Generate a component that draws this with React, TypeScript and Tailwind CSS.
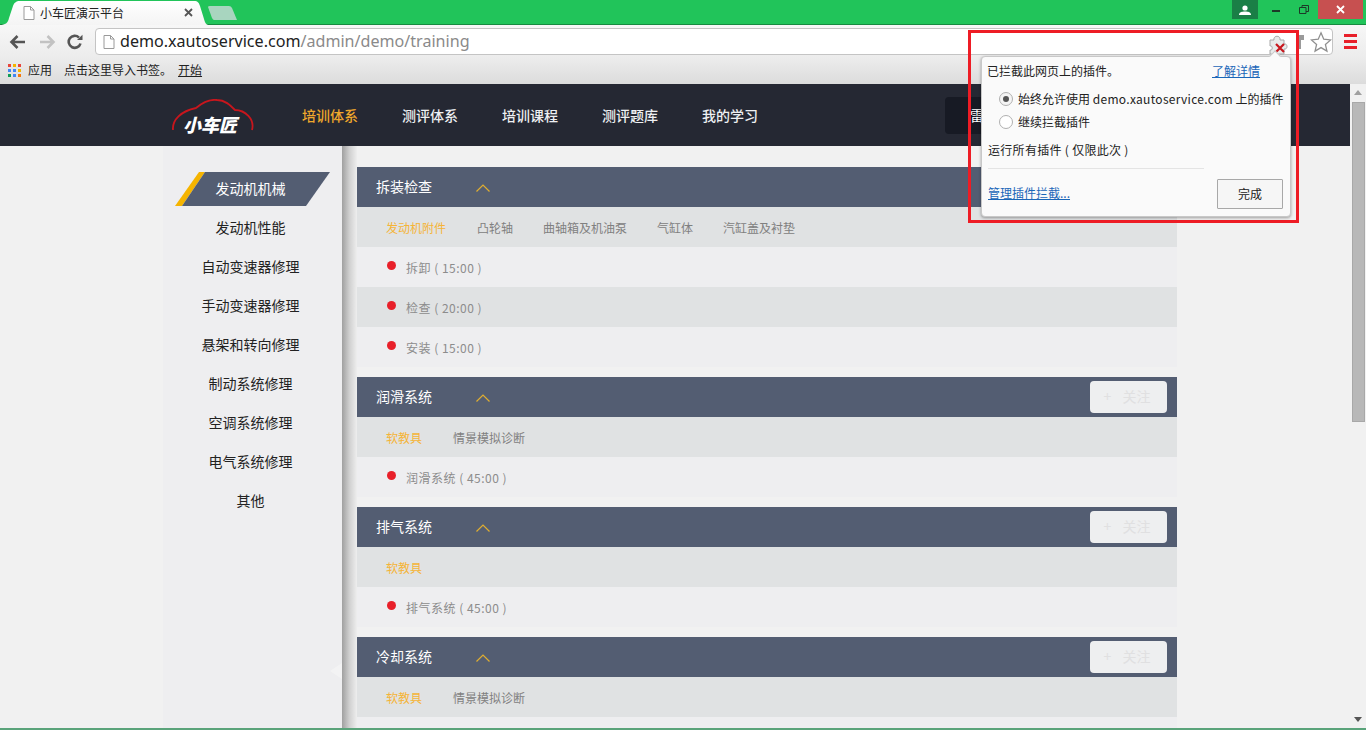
const font = "font-['Noto_Sans_CJK_SC','Noto_Sans',sans-serif]";

const navItems = ['培训体系', '测评体系', '培训课程', '测评题库', '我的学习'];
const sideItems = ['发动机性能', '自动变速器修理', '手动变速器修理', '悬架和转向修理', '制动系统修理', '空调系统修理', '电气系统修理', '其他'];

const sections = [
  {
    title: '拆装检查',
    tabs: ['发动机附件', '凸轮轴', '曲轴箱及机油泵', '气缸体', '汽缸盖及衬垫'],
    rows: ['拆卸 ( 15:00 )', '检查 ( 20:00 )', '安装 ( 15:00 )'],
  },
  { title: '润滑系统', tabs: ['软教具', '情景模拟诊断'], rows: ['润滑系统 ( 45:00 )'] },
  { title: '排气系统', tabs: ['软教具'], rows: ['排气系统 ( 45:00 )'] },
  { title: '冷却系统', tabs: ['软教具', '情景模拟诊断'], rows: [''] },
];

function Section({ title, tabs, rows }: { title: string; tabs: string[]; rows: string[] }) {
  return (
    <div className="mb-[10px]">
      <div className="flex items-center h-10 bg-[#535d72] pl-[19px] pr-[10px]">
        <span className="text-sm text-white w-[100px] pb-[2px]">{title}</span>
        <svg className="mt-[2px]" width="14" height="8" viewBox="0 0 14 8" fill="none" stroke="#e0ae30" strokeWidth="1.200">
          <path d="M.5 7.500L7 1l6.500 6.500" />
        </svg>
        <button className="ml-auto w-[77px] h-8 bg-[#eeeff0] rounded-sm flex items-center justify-center pr-[3px] pb-[2px] text-sm text-[#e0e0e1]">
          <span className="mr-[11px]">+</span>
          关注
        </button>
      </div>
      <div className="flex items-center gap-[30px] h-10 bg-[#e0e2e3] pl-[29px] pt-[1px] text-xs text-[#808080]">
        {tabs.map((t, i) => (
          <span key={t} className={i === 0 ? 'text-[#f5b437] mr-[1px]' : ''}>{t}</span>
        ))}
      </div>
      {rows.map((r, i) => (
        <div key={i} className={`flex items-center h-10 pl-[30px] text-xs text-[#8c8c8c] whitespace-pre ${i % 2 ? 'bg-[#e0e2e3]' : 'bg-[#eeeef0]'}`}>
          {r && <span className="w-[9px] h-[9px] rounded-full bg-[#e8202a] mr-[10px] -mt-[3px]" />}
          <span className="pt-[1px] tracking-[0.5px]">{r}</span>
        </div>
      ))}
    </div>
  );
}

function BrowserChrome() {
  return (
    <>
      {/* Tabs */}
      <div className="h-[25px] bg-[#21c45a] border-b border-[#178a40] flex relative">
        <div className="relative w-[208px] h-[25px] flex items-center">
          <svg className="absolute inset-0" width="208" height="25" viewBox="0 0 208 25">
            <defs>
              <linearGradient id="tabFill" x1="0" y1="0" x2="0" y2="1">
                <stop offset="0" stopColor="#ffffff" />
                <stop offset="1" stopColor="#f4f4f4" />
              </linearGradient>
            </defs>
            <path d="M0 25 C5 25 8 23 9 18 L13 6 C14 3 16 1 20 1 L194 1 C198 1 199 3 200 6 L204 19 C205 23 206 25 209 25 Z" fill="url(#tabFill)" />
          </svg>
          <svg className="relative ml-[23px]" width="12" height="14" viewBox="0 0 12 14" fill="none" stroke="#9a9a9a">
            <path d="M1 .5h6.500L11 4v9.500H1z" fill="#fff" />
            <path d="M7.500.5V4H11" />
          </svg>
          <span className="relative ml-[5px] text-xs text-[#222]">小车匠演示平台</span>
          <svg className="relative ml-[60px]" width="9" height="9" viewBox="0 0 9 9" stroke="#555" strokeWidth="1.800">
            <path d="M1 1l7 7M8 1l-7 7" />
          </svg>
        </div>
        <svg className="mt-[5px] -ml-[1px]" width="31" height="16" viewBox="0 0 31 16">
          <path d="M1 2 Q1 1 3 1 L22 1 Q24 1 25 3 L30 15 L7 15 Q6 15 5 13 Z" fill="#a8d5bf" />
        </svg>
        <div className="ml-auto flex items-start">
          <div className="w-[26px] h-[19px] bg-[#1a7f46] flex items-center justify-center">
            <svg width="12" height="10" viewBox="0 0 12 10" fill="#fff">
              <circle cx="6" cy="3" r="2.600" />
              <path d="M0 10c0-3 3-3.500 6-3.500s6 .5 6 3.500z" />
            </svg>
          </div>
          <div className="w-[28px] h-[19px] ml-[4px] flex items-center justify-center">
            <span className="w-2 h-0.5 mt-[3px] bg-[#1c3a28]" />
          </div>
          <div className="w-[28px] h-[19px] flex items-center justify-center">
            <svg width="10" height="9" viewBox="0 0 10 9" fill="none" stroke="#1c3a28">
              <path d="M.5 2.500h6.500v6H.5zM3 2.500V.5h6.500v6H7" />
            </svg>
          </div>
          <div className="w-[45px] h-[19px] mr-[3px] bg-[#c75050] flex items-center justify-center">
            <svg width="9" height="9" viewBox="0 0 9 9" stroke="#fff" strokeWidth="1.800">
              <path d="M1 1l7 7M8 1l-7 7" />
            </svg>
          </div>
        </div>
      </div>

      {/* Address bar */}
      <div className="h-[33px] bg-gradient-to-b from-[#f7f7f7] to-[#ececec] flex items-center pl-[9px]">
        <svg width="18" height="16" viewBox="0 0 18 16" fill="none" stroke="#555" strokeWidth="2.600">
          <path d="M16 8H3M8.500 2L2.500 8l6 6" />
        </svg>
        <svg className="ml-[11px]" width="18" height="16" viewBox="0 0 18 16" fill="none" stroke="#c2c2c2" strokeWidth="2.600">
          <path d="M2 8h13M9.500 2l6 6-6 6" />
        </svg>
        <svg className="ml-[11px]" width="16" height="16" viewBox="0 0 16 16" fill="none" stroke="#555" strokeWidth="2.600">
          <path d="M13.500 9.500A6 6 0 1 1 12 3.600" />
          <path d="M10 6h5.500V.8z" fill="#555" stroke="none" />
        </svg>
        <div className="ml-[12px] w-[1238px] h-[27px] bg-white border border-[#c4c4c4] rounded-sm flex items-center pl-[7px]">
          <svg width="12" height="14" viewBox="0 0 12 14" fill="none" stroke="#9a9a9a">
            <path d="M1 .5h6.500L11 4v9.500H1z" />
            <path d="M7.500.5V4H11" />
          </svg>
          <span className="ml-[5px] text-[16.1px] leading-none text-[#222] font-['Noto_Sans',sans-serif]">
            demo.xautoservice.com<span className="text-[#8a8a8a]">/admin/demo/training</span>
          </span>
          <svg className="ml-auto" width="22" height="22" viewBox="0 0 24 24" fill="#fff" stroke="#8f8f8f" strokeWidth="1.400">
            <path d="M12 2l3 7 7.500.7-5.700 5 1.700 7.300-6.500-3.900-6.500 3.900 1.700-7.300-5.700-5L9 9z" />
          </svg>
        </div>
        <div className="ml-[11px] flex flex-col gap-[3px]">
          <span className="block w-[13px] h-[3px] bg-[#e8202a]" />
          <span className="block w-[13px] h-[3px] bg-[#e8202a]" />
          <span className="block w-[13px] h-[3px] bg-[#e8202a]" />
        </div>
      </div>

      {/* Bookmarks */}
      <div className="h-[26px] bg-gradient-to-b from-[#ececec] to-[#dcdcdc] flex items-center pl-2 pb-[2px] text-xs text-[#222]">
        <svg width="13" height="13" viewBox="0 0 13 13">
          {[
            '#e8453c', '#f4b400', '#e8453c',
            '#4285f4', '#4285f4', '#f4b400',
            '#0f9d58', '#4285f4', '#f4790f',
          ].map((c, i) => (
            <rect key={i} x={(i % 3) * 5} y={Math.floor(i / 3) * 5} width="3" height="3" fill={c} />
          ))}
        </svg>
        <span className="ml-[7px]">应用</span>
        <span className="ml-[12px]">点击这里导入书签。</span>
        <span className="ml-[6px] underline">开始</span>
      </div>
    </>
  );
}

function PluginPopup() {
  return (
    <div className="absolute left-[968px] top-[30px] w-[331px] h-[193px] border-[3px] border-[#ee1c25]">
      {/* puzzle + blocked cross */}
      <svg className="absolute left-[297px] top-[0px]" width="22" height="24" viewBox="0 0 22 24">
        <path d="M2 7h4c-1-5 7-5 6 0h4v4c4-1 4 6 0 5v5H2v-4c3 1 3-5 0-4z" fill="#e8eaea" stroke="#a8a8a8" />
        <path d="M8 11l8 8M16 11l-8 8" stroke="#c8161d" strokeWidth="2.200" />
      </svg>
      {/* key icon sticking out past the border */}
      <svg className="absolute left-[328px] top-[2px]" width="5" height="14" viewBox="0 0 5 14" fill="#9a9a9a">
        <rect x="0" y="0" width="5" height="5" />
        <rect x="0" y="5" width="2" height="9" />
      </svg>
      <div className="absolute left-[10px] top-[23px] w-[310px] h-[161px] bg-[#fafafa] border border-[#c8c8c8] rounded-sm shadow-[0_1px_3px_rgba(0,0,0,0.35)] text-xs text-[#222]">
        <div className="absolute left-[289px] -top-[5px] w-2 h-2 rotate-45 bg-[#fafafa] border-l border-t border-[#c8c8c8]" />
        <div className="absolute left-[5px] top-[6px]">已拦截此网页上的插件。</div>
        <div className="absolute left-[230px] top-[6px] text-[#1a66b8] underline">了解详情</div>
        <div className="absolute left-[17px] top-[34px] flex items-center">
          <span className="w-[14px] h-[14px] rounded-full border border-[#b0b0b0] bg-[#f4f4f4] flex items-center justify-center">
            <span className="w-[6px] h-[6px] rounded-full bg-[#555]" />
          </span>
          <span className="ml-[5px] whitespace-nowrap">
            始终允许使用 <span className="tracking-[0.3px]">demo.xautoservice.com</span> 上的插件
          </span>
        </div>
        <div className="absolute left-[17px] top-[57px] flex items-center">
          <span className="w-[14px] h-[14px] rounded-full border border-[#b0b0b0] bg-white" />
          <span className="ml-[5px]">继续拦截插件</span>
        </div>
        <div className="absolute left-[6px] top-[85px] whitespace-pre tracking-[0.3px]">运行所有插件 ( 仅限此次 )</div>
        <div className="absolute left-[6px] top-[111px] w-[216px] border-t border-[#e4e4e4]" />
        <div className="absolute left-[6px] top-[128px] text-[#1a66b8] underline">管理插件拦截...</div>
        <button className="absolute left-[235px] top-[122px] w-[66px] h-[30px] bg-[#f6f6f6] border border-[#a8a8a8] rounded-[1px] text-xs text-[#222]">
          完成
        </button>
      </div>
    </div>
  );
}

export default function App() {
  return (
    <div className={`relative w-[1366px] h-[730px] overflow-hidden bg-[#f1f1f1] flex flex-col ${font}`}>
      <BrowserChrome />

      <div className="flex flex-1 min-h-0">
        <div className="w-[1350px] flex flex-col min-h-0">
          {/* Site header */}
          <header className="h-[62px] bg-[#252833] flex items-center shrink-0">
            <div className="relative ml-[172px] w-[82px] h-[34px] mt-[1px]">
              <svg className="absolute inset-0" width="82" height="34" viewBox="0 0 82 34" fill="none" stroke="#c8161d" strokeWidth="1.800">
                <path d="M1 31C0 21 9 12 24 9C30 4 37 0 45 1C53 1 58 6 63 11C73 11 83 20 80 31" />
              </svg>
              <span className="absolute left-[11px] top-[15px] text-[18px] leading-[20px] font-black italic text-white whitespace-nowrap">小车匠</span>
            </div>
            <nav className="ml-[48px] flex gap-[44px] text-sm font-medium text-[#eef0f2]">
              {navItems.map((n, i) => (
                <span key={n} className={i === 0 ? 'text-[#f0a82c]' : ''}>{n}</span>
              ))}
            </nav>
            <div className="ml-[187px] w-[300px] h-[37px] rounded bg-[#171a24] flex items-center pl-[25px] text-sm text-white">
              雷
            </div>
          </header>

          {/* Page */}
          <div className="flex flex-1 min-h-0 pl-[163px]">
            <aside className="w-[179px] bg-[#eeeef0] pt-[22px] text-sm text-[#222] text-center shrink-0">
              <div className="relative h-[39px] flex items-center justify-center pr-[4px]">
                <div className="absolute left-[12px] top-[4px] w-[155px] h-[34px] bg-[#f5b400] [clip-path:polygon(24px_0,30px_0,7px_100%,0_100%)]" />
                <div className="absolute left-[12px] top-[4px] w-[155px] h-[34px] bg-[#535d72] [clip-path:polygon(30px_0,100%_0,131px_100%,7px_100%)]" />
                <span className="relative text-white">发动机机械</span>
              </div>
              {sideItems.map((s) => (
                <div key={s} className="h-[39px] flex items-center justify-center pr-[4px]">{s}</div>
              ))}
            </aside>
            <div className="w-[15px] bg-gradient-to-r from-[#a0a0a0] via-[#d0d0d0] to-[#eeeeee] shrink-0" />
            <main className="w-[820px] pt-[21px] overflow-hidden">
              {sections.map((s) => (
                <Section key={s.title} {...s} />
              ))}
            </main>
          </div>
        </div>

        {/* Scrollbar */}
        <div className="w-4 bg-[#f1f1f1] flex flex-col items-center pb-[8px]">
          <div className="mt-[6px] w-0 h-0 border-x-[4px] border-x-transparent border-b-[5px] border-b-[#a0a0a0]" />
          <div className="mt-[7px] w-[13px] h-[320px] bg-[#b8b8b8] border border-[#a8a8a8]" />
          <div className="mt-auto w-0 h-0 border-x-[4px] border-x-transparent border-t-[5px] border-t-[#555]" />
        </div>
      </div>

      {/* Faint carousel arrow on the sidebar edge */}
      <div className="absolute left-[330px] top-[663px] w-0 h-0 border-y-[8px] border-y-transparent border-r-[12px] border-r-[#f3f3f4]" />

      {/* Taskbar edge */}
      <div className="absolute left-0 right-0 bottom-0 h-[2px] bg-[#5aa37a]" />

      <PluginPopup />
    </div>
  );
}
